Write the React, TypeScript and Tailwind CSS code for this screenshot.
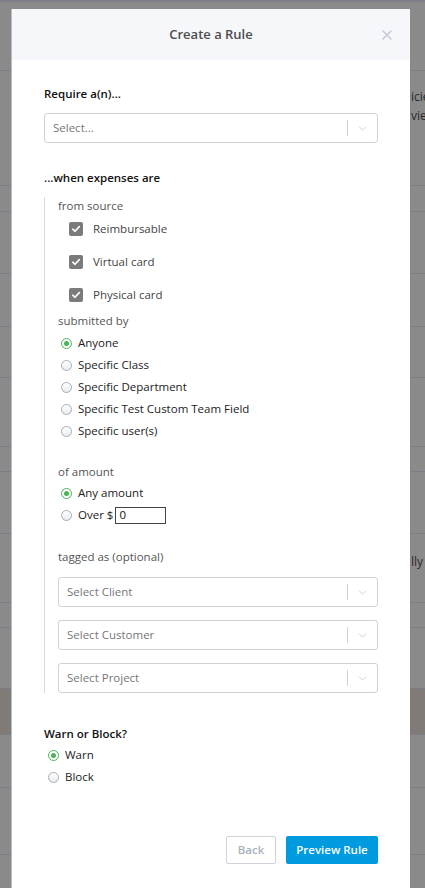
import { X, ChevronDown } from 'lucide-react';

const font = { fontFamily: '"Open Sans", "Liberation Sans", sans-serif' };

// rows of the page behind the overlay (heights in px), only the right strip shows
const bgRows: { h: string; text?: string[]; tint?: boolean }[] = [
  { h: 'h-[69px]' },
  { h: 'h-[115px] pt-[16px]', text: ['icie', 'viev'] },
  { h: 'h-[26px]' },
  { h: 'h-[62px]' },
  { h: 'h-[53px]' },
  { h: 'h-[51px]' },
  { h: 'h-[69px]' },
  { h: 'h-[25px]' },
  { h: 'h-[62px]' },
  { h: 'h-[69px] pt-[18px]', text: ['lly'] },
  { h: 'h-[25px]' },
  { h: 'h-[61px]' },
  { h: 'h-[46px]', tint: true },
  { h: 'h-[53px]' },
  { h: 'h-[67px]' },
  { h: 'h-[40px]' },
];

function SelectBox({ placeholder }: { placeholder: string }) {
  return (
    <div className="flex h-[30px] items-center rounded-[3px] border border-[#cfd2d6] bg-white">
      <span className="flex-1 pl-[8px] text-[11.5px] text-[#777]">{placeholder}</span>
      <span className="h-[16px] w-px bg-[#cfd2d6]" />
      <span className="flex w-[29px] items-center justify-center text-[#c4c6ca]">
        <ChevronDown size={13} strokeWidth={1.5} />
      </span>
    </div>
  );
}

function Checkbox({ label }: { label: string }) {
  return (
    <div className="flex h-[33px] items-center pl-[11px]">
      <span className="flex h-[14px] w-[14px] items-center justify-center rounded-[2px] bg-[#7b7b7b]">
        <svg width="10" height="10" viewBox="0 0 10 10" fill="none">
          <path d="M1.8 5.2 L4 7.3 L8.3 2.6" stroke="white" strokeWidth="1.6" strokeLinecap="round" strokeLinejoin="round" />
        </svg>
      </span>
      <span className="ml-[10px] text-[11.5px] text-[#444]">{label}</span>
    </div>
  );
}

function Radio({ label, checked, children }: { label: string; checked?: boolean; children?: React.ReactNode }) {
  return (
    <div className="flex h-[22px] items-center">
      <span
        className={
          checked
            ? 'flex h-[11px] w-[11px] items-center justify-center rounded-full border border-[#4cb35a] bg-white'
            : 'h-[11px] w-[11px] rounded-full border border-[#a9adb7] bg-gradient-to-b from-white to-[#e9ebef]'
        }
      >
        {checked && <span className="h-[5px] w-[5px] rounded-full bg-[#4cb35a]" />}
      </span>
      <span className="ml-[6px] text-[11.5px] text-[#222]">{label}</span>
      {children}
    </div>
  );
}

export default function App() {
  return (
    <div className="relative h-[888px] w-[425px] overflow-hidden bg-[#8a8a8a]" style={font}>
      {/* page behind the dim overlay */}
      <div className="flex flex-col border-t-2 border-[#7b7e86]">
        {bgRows.map((r, i) => (
          <div
            key={i}
            className={`${r.h} flex flex-col border-b border-[#7b7e86] pl-[411px] ${r.tint ? 'bg-[#807b76]' : ''}`}
          >
            {r.text?.map((t) => (
              <span key={t} className="whitespace-nowrap leading-[19px] text-[12px] text-[#2a2a2a]">
                {t}
              </span>
            ))}
          </div>
        ))}
      </div>

      {/* modal */}
      <div className="absolute left-[11px] top-[9px] flex h-[900px] w-[399px] flex-col border-l border-[#b9bcc3] bg-white">
        <div className="relative flex h-[51px] items-center justify-center bg-[#f5f7fa]">
          <h1 className="text-[13px] font-semibold text-[#4d4d4d]">Create a Rule</h1>
          <X className="absolute right-[15px] top-[18px] text-[#c3c9d2]" size={16} strokeWidth={2.2} />
        </div>

        <div className="flex flex-col pl-[32px] pr-[32px] pt-[25px]">
          <p className="text-[11.5px] font-semibold leading-[18px] text-[#111]">Require a(n)...</p>
          <div className="mt-[10px]">
            <SelectBox placeholder="Select..." />
          </div>

          <p className="mt-[26px] text-[11.5px] font-semibold leading-[18px] text-[#111]">...when expenses are</p>

          <div className="mt-[10px] flex flex-col border-l border-[#d6dbe3] pl-[13px]">
            <p className="text-[11.5px] leading-[18px] text-[#555]">from source</p>
            <div className="-mt-[3px] flex flex-col">
              <Checkbox label="Reimbursable" />
              <Checkbox label="Virtual card" />
              <Checkbox label="Physical card" />
            </div>

            <p className="mt-[1px] text-[11.5px] leading-[18px] text-[#555]">submitted by</p>
            <div className="mt-[2px] flex flex-col pl-[3px]">
              <Radio label="Anyone" checked />
              <Radio label="Specific Class" />
              <Radio label="Specific Department" />
              <Radio label="Specific Test Custom Team Field" />
              <Radio label="Specific user(s)" />
            </div>

            <p className="mt-[21px] text-[11.5px] leading-[18px] text-[#555]">of amount</p>
            <div className="mt-[1px] flex flex-col pl-[3px]">
              <Radio label="Any amount" checked />
              <Radio label="Over $">
                <input
                  readOnly
                  value="0"
                  className="ml-[2px] h-[17px] w-[51px] border border-[#444] px-[3px] text-[11.5px] text-[#111] outline-none"
                />
              </Radio>
            </div>

            <p className="mt-[22px] text-[11.5px] leading-[18px] text-[#555]">tagged as (optional)</p>
            <div className="mt-[11px] flex flex-col gap-[13px]">
              <SelectBox placeholder="Select Client" />
              <SelectBox placeholder="Select Customer" />
              <SelectBox placeholder="Select Project" />
            </div>
          </div>

          <p className="mt-[32px] text-[11.5px] font-semibold leading-[18px] text-[#111]">Warn or Block?</p>
          <div className="mt-[1px] flex flex-col pl-[4px]">
            <Radio label="Warn" checked />
            <Radio label="Block" />
          </div>

          <div className="mt-[48px] flex justify-end gap-[10px]">
            <button
              type="button"
              className="h-[28px] w-[50px] rounded-[2px] border border-[#cfd4dc] bg-white text-[11.5px] font-semibold text-[#a9b1bc]"
            >
              Back
            </button>
            <button
              type="button"
              className="h-[28px] w-[92px] rounded-[2px] bg-[#009ade] text-[11.5px] font-semibold text-white"
            >
              Preview Rule
            </button>
          </div>
        </div>
      </div>
    </div>
  );
}
